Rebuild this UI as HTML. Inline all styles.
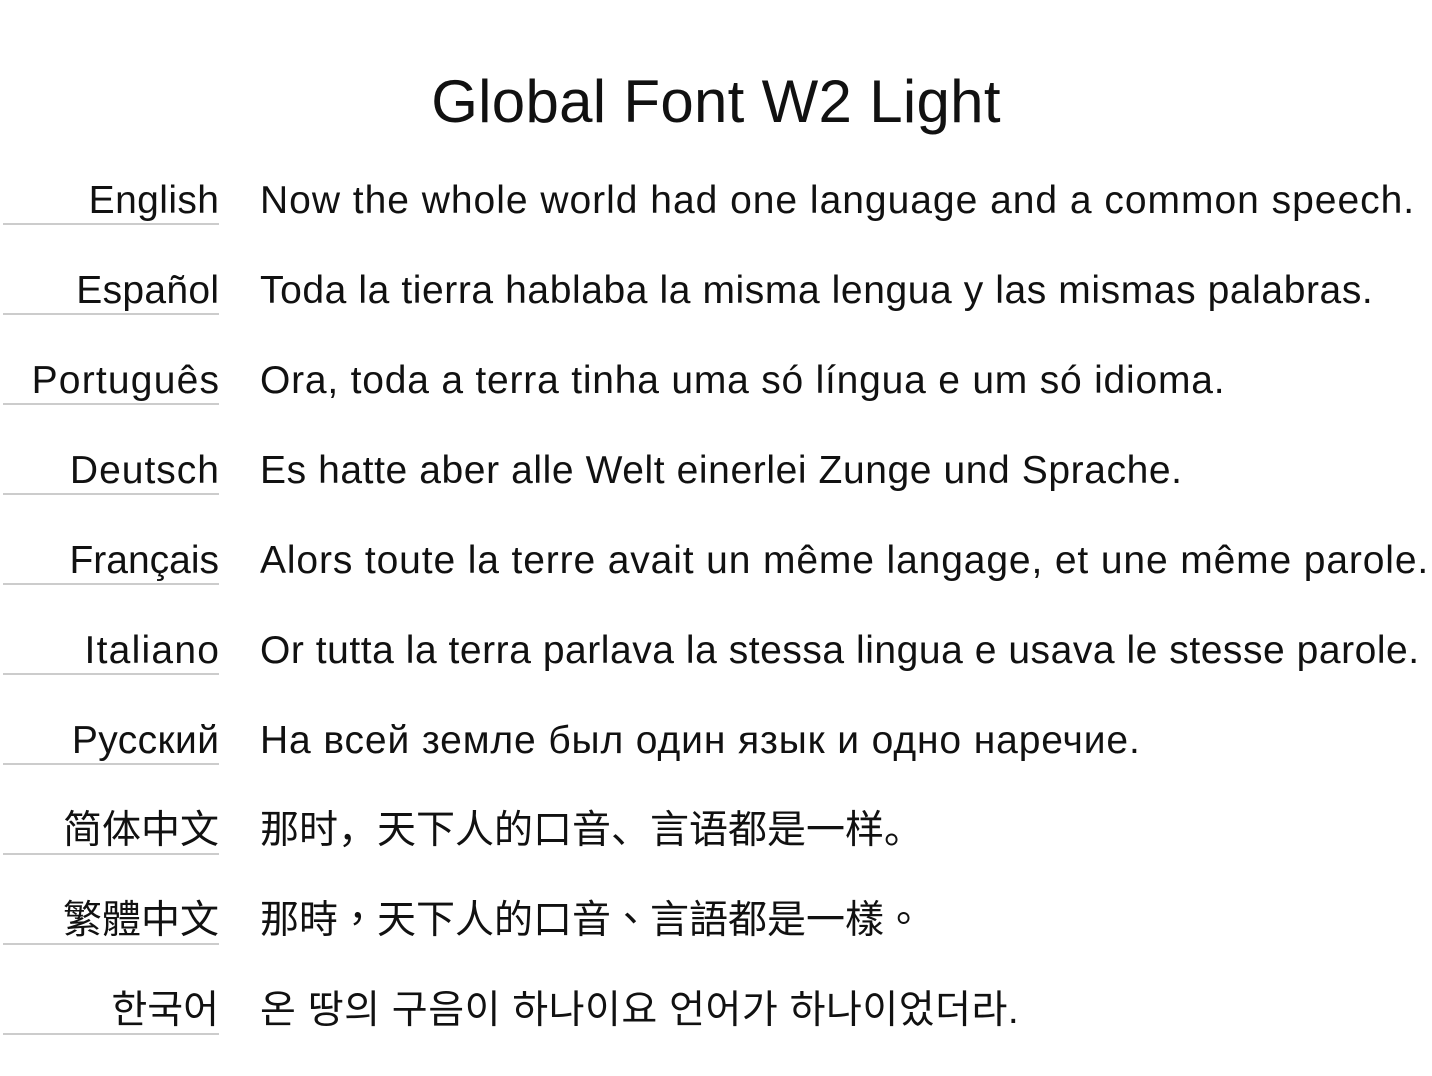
<!DOCTYPE html>
<html><head><meta charset="utf-8"><style>
body{margin:0;background:#fff;width:1432px;height:1076px;overflow:hidden;font-family:"Liberation Sans","Noto Sans CJK SC",sans-serif;color:#111;}
h1{position:absolute;left:0;width:1432px;top:67px;margin:0;text-align:center;font-weight:normal;font-size:60px;line-height:70px;letter-spacing:0.3px;}
.row{position:absolute;left:0;height:60px;width:1432px;}
.lab{position:absolute;left:3px;width:216px;top:0;text-align:right;font-size:39px;line-height:56px;border-bottom:2px solid #ccc;height:50px;white-space:nowrap;}
.txt{position:absolute;left:260px;top:0;font-size:39px;line-height:56px;white-space:nowrap;}
.tc{font-family:"Liberation Sans","Noto Sans CJK TC",sans-serif}
.kr{font-family:"Liberation Sans","Noto Sans CJK KR",sans-serif}
.kr .txt{letter-spacing:0.5px}
</style></head><body>
<h1>Global Font W2 Light</h1>
<div class="row" style="top:173px"><div class="lab"><span style="letter-spacing:0.4px;margin-right:-0.4px">English</span></div><div class="txt" style="letter-spacing:0.98px">Now the whole world had one language and a common speech.</div></div>
<div class="row" style="top:263px"><div class="lab"><span style="letter-spacing:0.3px;margin-right:-0.3px">Español</span></div><div class="txt" style="letter-spacing:0.59px">Toda la tierra hablaba la misma lengua y las mismas palabras.</div></div>
<div class="row" style="top:353px"><div class="lab"><span style="letter-spacing:1.2px;margin-right:-1.2px">Português</span></div><div class="txt" style="letter-spacing:0.79px">Ora, toda a terra tinha uma só língua e um só idioma.</div></div>
<div class="row" style="top:443px"><div class="lab"><span style="letter-spacing:1px;margin-right:-1px">Deutsch</span></div><div class="txt" style="letter-spacing:0.59px">Es hatte aber alle Welt einerlei Zunge und Sprache.</div></div>
<div class="row" style="top:533px"><div class="lab"><span>Français</span></div><div class="txt" style="letter-spacing:0.87px">Alors toute la terre avait un même langage, et une même parole.</div></div>
<div class="row" style="top:623px"><div class="lab"><span style="letter-spacing:1.25px;margin-right:-1.25px">Italiano</span></div><div class="txt" style="letter-spacing:0.54px">Or tutta la terra parlava la stessa lingua e usava le stesse parole.</div></div>
<div class="row" style="top:713px"><div class="lab"><span style="letter-spacing:0.4px;margin-right:-0.4px">Русский</span></div><div class="txt" style="letter-spacing:0.88px">На всей земле был один язык и одно наречие.</div></div>
<div class="row" style="top:803px"><div class="lab">简体中文</div><div class="txt">那时，天下人的口音、言语都是一样。</div></div>
<div class="row tc" style="top:893px"><div class="lab">繁體中文</div><div class="txt">那時，天下人的口音、言語都是一樣。</div></div>
<div class="row kr" style="top:983px"><div class="lab">한국어</div><div class="txt">온 땅의 구음이 하나이요 언어가 하나이었더라.</div></div>
</body></html>
